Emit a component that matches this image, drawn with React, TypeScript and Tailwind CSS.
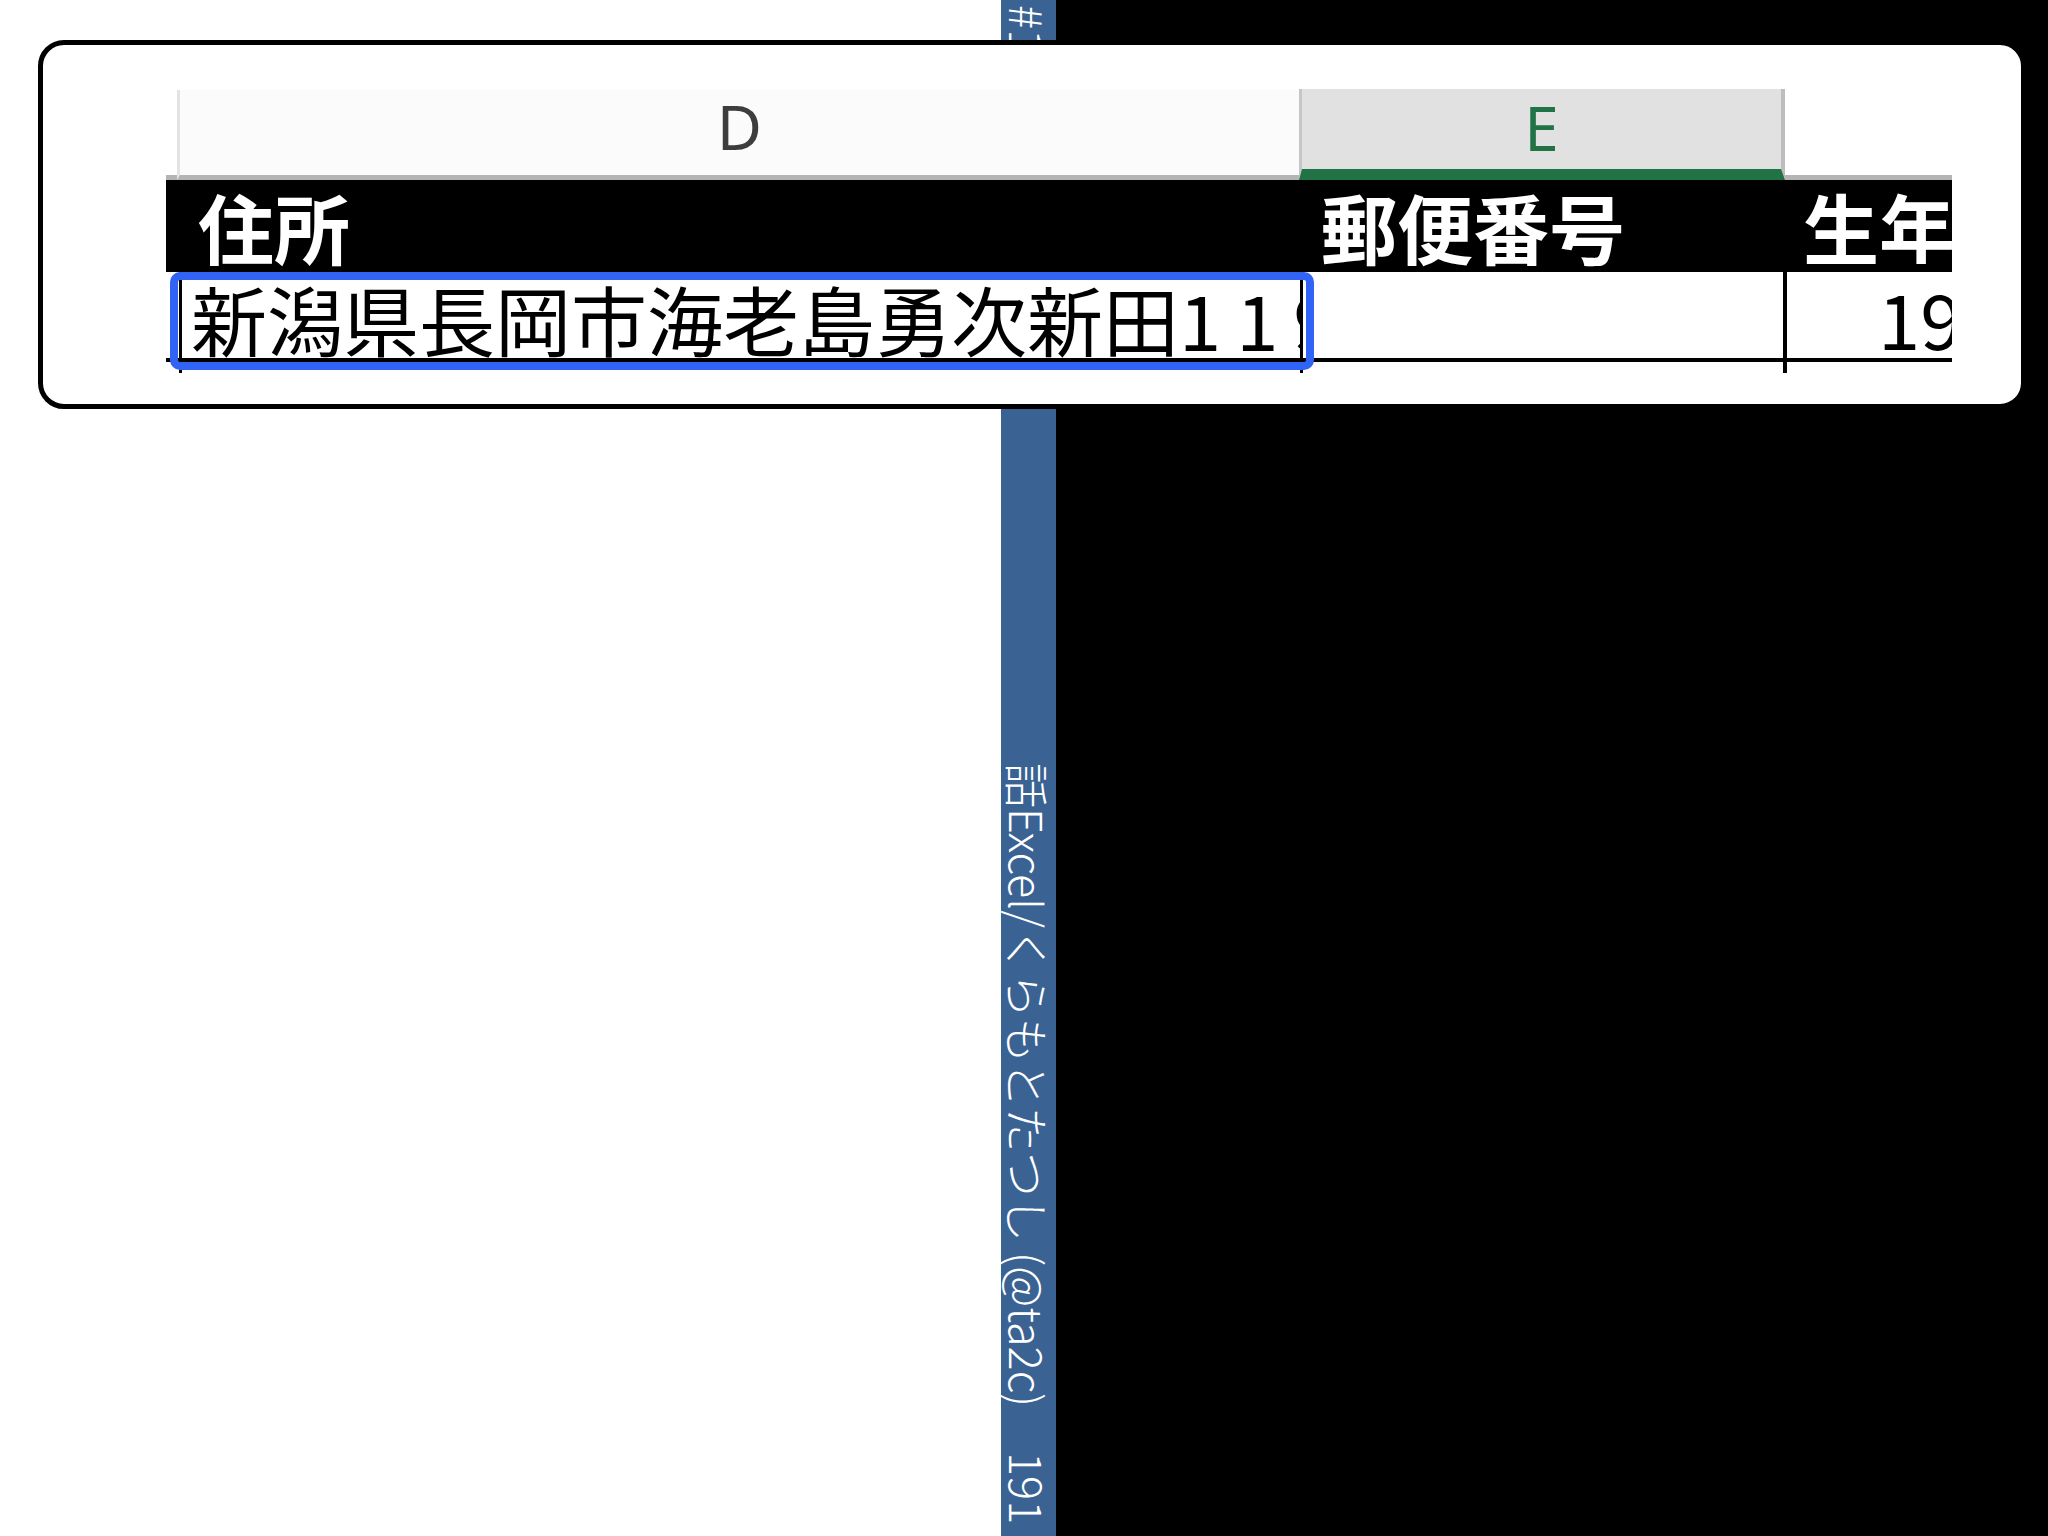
const SideStrip = () => (
  <div className="flex w-[55px] shrink-0 flex-col items-center bg-[#3a6394] text-[45px] font-light leading-none text-white">
    <span className="mt-[5px] [text-orientation:sideways] [writing-mode:vertical-rl]">#12</span>
    <span className="mt-auto [text-orientation:sideways] [writing-mode:vertical-rl]">
      話Excel/くらもとたつし (@ta2c)
    </span>
    <span className="mb-[12px] mt-[44px] [text-orientation:sideways] [writing-mode:vertical-rl]">191</span>
  </div>
);

const SheetCard = () => (
  <div className="absolute left-[38px] top-[40px] h-[369px] w-[1988px] rounded-[26px] border-[5px] border-black bg-white">
    <div className="ml-[123px] mt-[44px] w-[1786px] overflow-hidden">
      {/* column letters */}
      <div className="flex h-[91px] font-['Noto_Sans',sans-serif] text-[62px] leading-none">
        <div className="w-[11px] shrink-0 border-b-[5px] border-[#b4b4b4]" />
        <div className="mt-[1px] flex w-[1122px] shrink-0 items-center justify-center border-b-[5px] border-l-[3px] border-b-[#b4b4b4] border-l-[#e3e3e3] bg-[#fbfbfb] pb-[14px] text-[#3d3d3d]">
          D
        </div>
        <div className="flex w-[486px] shrink-0 items-center justify-center border-b-[11px] border-l-[3px] border-r-[4px] border-b-[#217346] border-l-[#c6c6c6] border-r-[#bdbdbd] bg-[#e1e1e1] pb-[4px] text-[#217346]">
          E
        </div>
        <div className="flex-1 border-b-[5px] border-[#b4b4b4]" />
      </div>

      {/* header row */}
      <div className="flex h-[92px] items-center whitespace-nowrap bg-black text-[76px] font-bold leading-none text-white">
        <div className="w-[11px] shrink-0" />
        <div className="w-[1122px] shrink-0 pl-[21px]">住所</div>
        <div className="w-[486px] shrink-0 pl-[22px]">郵便番号</div>
        <div className="flex-1 overflow-hidden pl-[18px]">生年月日</div>
      </div>

      {/* data row */}
      <div className="relative flex h-[101px] text-[76px] leading-none text-black">
        <div className="w-[13px] shrink-0">
          <div className="h-[90px] border-b-[4px] border-black" />
        </div>
        <div className="w-[1121px] shrink-0 border-l-[3px] border-black">
          <div className="flex h-[90px] items-center overflow-hidden whitespace-nowrap border-b-[4px] border-black pl-[9px] pt-[6px]">
            新潟県長岡市海老島勇次新田<span className="tracking-[15px]">119</span>
          </div>
        </div>
        <div className="w-[483px] shrink-0 border-l-[3px] border-black">
          <div className="h-[90px] border-b-[4px] border-black" />
        </div>
        <div className="flex-1 border-l-[4px] border-black">
          <div className="flex h-[90px] items-center overflow-hidden whitespace-nowrap border-b-[4px] border-black pl-[91px] pt-[4px]">
            1990
          </div>
        </div>
        <div className="absolute left-[4px] top-0 h-[98px] w-[1144px] rounded-[10px] border-[8px] border-[#3163f5]" />
      </div>
    </div>
  </div>
);

export default function App() {
  return (
    <div className="relative flex h-[1536px] w-[2048px] overflow-hidden bg-black font-['Noto_Sans_CJK_JP',sans-serif]">
      <div className="w-[1001px] shrink-0 bg-white" />
      <SideStrip />
      <div className="flex-1 bg-black" />
      <SheetCard />
    </div>
  );
}
